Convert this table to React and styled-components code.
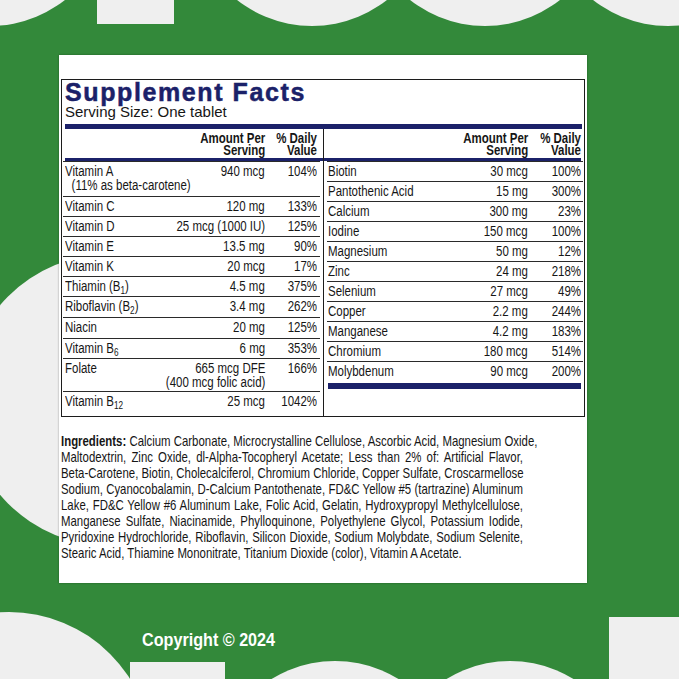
import React from 'react';
import styled, { createGlobalStyle } from 'styled-components';

const SANS = `"Liberation Sans", Arial, sans-serif`;
const SQUEEZE = 0.82;
const NAVY = '#1b2169';
const GREEN = '#33893a';
const GREY = '#efefef';
const INK = '#161616';

const Global = createGlobalStyle`
  html, body { margin: 0; padding: 0; background: ${GREEN}; }
  body { font-family: ${SANS}; }
`;

const Page = styled.div`
  position: relative;
  width: 679px;
  height: 679px;
  overflow: hidden;
  background: ${GREEN};
`;

const Backdrop = styled.svg`
  position: absolute;
  left: 0;
  top: 0;
  width: 679px;
  height: 679px;
`;

const Content = styled.div`
  position: relative;
  display: flex;
  flex-direction: column;
  align-items: flex-start;
  padding: 55px 0 0 59px;
`;

const Card = styled.section`
  width: 528px;
  height: 528px;
  box-sizing: border-box;
  background: #fff;
  padding: 24px 2px 0;
  box-shadow: 0 0 2px rgba(0, 0, 0, 0.35);
`;

const Label = styled.div`
  border: 1px solid #1c1c1c;
`;

const Title = styled.h1`
  margin: 0;
  padding-left: 3px;
  font-family: ${SANS};
  font-size: 25px;
  line-height: 24px;
  font-weight: 700;
  letter-spacing: 1.6px;
  color: ${NAVY};
  -webkit-text-stroke: 0.5px ${NAVY};
`;

const Serving = styled.div`
  padding-left: 3px;
  font-family: ${SANS};
  font-size: 15px;
  line-height: 16px;
  color: ${INK};
`;

const Bar = styled.div`
  height: ${(p) => p.$h}px;
  background: ${NAVY};
  margin: ${(p) => p.$m};
`;

const Tables = styled.div`
  display: grid;
  grid-template-columns: 261px 1fr;
`;

const Column = styled.div`
  display: flex;
  flex-direction: column;
  padding: ${(p) => p.$pad};
  border-left: ${(p) => (p.$divider ? '1px solid #1c1c1c' : 'none')};
`;

const Head = styled.div`
  display: grid;
  grid-template-columns: minmax(0, 1fr) auto ${(p) => p.$dv}px;
  height: 29px;
  box-sizing: border-box;
  padding: 3px ${(p) => p.$rp} 0 ${(p) => p.$lp};
  font-family: ${SANS};
  font-weight: 700;
  font-size: 14px;
  line-height: 12px;
  color: ${INK};
  text-align: right;
  white-space: nowrap;
`;

const HeadCell = styled.div`
  transform: scaleX(${SQUEEZE});
  transform-origin: right center;
`;

const Row = styled.div`
  display: grid;
  grid-template-columns: minmax(0, 1fr) auto ${(p) => p.$dv}px;
  height: ${(p) => p.$h}px;
  box-sizing: border-box;
  border-top: 1px solid #2a2a2a;
  padding: 2px ${(p) => p.$rp} 0 ${(p) => p.$lp};
  font-family: ${SANS};
  font-size: 14px;
  line-height: 14px;
  color: ${INK};
  white-space: nowrap;
`;

const Name = styled.div`
  text-align: left;
  transform: scaleX(${SQUEEZE});
  transform-origin: left center;
`;

const Note = styled.div`
  padding-left: ${(p) => p.$indent || 0}px;
`;

const Amount = styled.div`
  text-align: right;
  transform: scaleX(${SQUEEZE});
  transform-origin: right center;
`;

const Daily = styled.div`
  text-align: right;
  transform: scaleX(${SQUEEZE});
  transform-origin: right center;
`;

const Sub = styled.sub`
  font-size: 10px;
  line-height: 0;
  vertical-align: -3px;
`;

const ING_SCALE = 0.76;

const Ingredients = styled.div`
  margin-top: 16px;
  width: ${462 / ING_SCALE}px;
  transform: scaleX(${ING_SCALE});
  transform-origin: left top;
  font-family: ${SANS};
  font-size: 15px;
  line-height: 16px;
  color: ${INK};
`;

const IngLine = styled.span`
  display: block;
  white-space: nowrap;
  text-align: justify;
  text-align-last: ${(p) => (p.$last ? 'left' : 'justify')};
`;

const Bold = styled.b`
  font-weight: 700;
`;

const Copyright = styled.div`
  margin: 47px 0 0 83px;
  font-family: ${SANS};
  font-weight: 700;
  font-size: 19px;
  line-height: 20px;
  color: #ffffff;
  transform: scaleX(0.85);
  transform-origin: left center;
  white-space: nowrap;
`;

const leftRows = [
  { name: 'Vitamin A', note: '(11% as beta-carotene)', amt: '940 mcg', dv: '104%', h: 35 },
  { name: 'Vitamin C', amt: '120 mg', dv: '133%', h: 20 },
  { name: 'Vitamin D', amt: '25 mcg (1000 IU)', dv: '125%', h: 20 },
  { name: 'Vitamin E', amt: '13.5 mg', dv: '90%', h: 20 },
  { name: 'Vitamin K', amt: '20 mcg', dv: '17%', h: 20 },
  { name: <>Thiamin (B<Sub>1</Sub>)</>, amt: '4.5 mg', dv: '375%', h: 20 },
  { name: <>Riboflavin (B<Sub>2</Sub>)</>, amt: '3.4 mg', dv: '262%', h: 21 },
  { name: 'Niacin', amt: '20 mg', dv: '125%', h: 21 },
  { name: <>Vitamin B<Sub>6</Sub></>, amt: '6 mg', dv: '353%', h: 20 },
  { name: 'Folate', amt: '665 mcg DFE', amtNote: '(400 mcg folic acid)', dv: '166%', h: 33 },
  { name: <>Vitamin B<Sub>12</Sub></>, amt: '25 mcg', dv: '1042%', h: 25 },
];

const rightRows = [
  { name: 'Biotin', amt: '30 mcg', dv: '100%' },
  { name: 'Pantothenic Acid', amt: '15 mg', dv: '300%' },
  { name: 'Calcium', amt: '300 mg', dv: '23%' },
  { name: 'Iodine', amt: '150 mcg', dv: '100%' },
  { name: 'Magnesium', amt: '50 mg', dv: '12%' },
  { name: 'Zinc', amt: '24 mg', dv: '218%' },
  { name: 'Selenium', amt: '27 mcg', dv: '49%' },
  { name: 'Copper', amt: '2.2 mg', dv: '244%' },
  { name: 'Manganese', amt: '4.2 mg', dv: '183%' },
  { name: 'Chromium', amt: '180 mcg', dv: '514%' },
  { name: 'Molybdenum', amt: '90 mcg', dv: '200%' },
];

const ingredientLines = [
  'Calcium Carbonate, Microcrystalline Cellulose, Ascorbic Acid, Magnesium Oxide,',
  'Maltodextrin, Zinc Oxide, dl-Alpha-Tocopheryl Acetate; Less than 2% of: Artificial Flavor,',
  'Beta-Carotene, Biotin, Cholecalciferol, Chromium Chloride, Copper Sulfate, Croscarmellose',
  'Sodium, Cyanocobalamin, D-Calcium Pantothenate, FD&C Yellow #5 (tartrazine) Aluminum',
  'Lake, FD&C Yellow #6 Aluminum Lake, Folic Acid, Gelatin, Hydroxypropyl Methylcellulose,',
  'Manganese Sulfate, Niacinamide, Phylloquinone, Polyethylene Glycol, Potassium Iodide,',
  'Pyridoxine Hydrochloride, Riboflavin, Silicon Dioxide, Sodium Molybdate, Sodium Selenite,',
  'Stearic Acid, Thiamine Mononitrate, Titanium Dioxide (color), Vitamin A Acetate.',
];

function FactRow({ row, dv, lp, rp }) {
  return (
    <Row $h={row.h || 20} $dv={dv} $lp={lp} $rp={rp}>
      <Name>
        <div>{row.name}</div>
        {row.note && <Note $indent={8}>{row.note}</Note>}
      </Name>
      <Amount>
        <div>{row.amt}</div>
        {row.amtNote && <Note>{row.amtNote}</Note>}
      </Amount>
      <Daily>{row.dv}</Daily>
    </Row>
  );
}

function ColumnHead({ dv, lp, rp }) {
  return (
    <Head $dv={dv} $lp={lp} $rp={rp}>
      <span />
      <HeadCell>Amount Per<br />Serving</HeadCell>
      <HeadCell>% Daily<br />Value</HeadCell>
    </Head>
  );
}

export default function App() {
  return (
    <Page>
      <Global />
      <Backdrop viewBox="0 0 679 679" aria-hidden="true">
        <g fill={GREY}>
          <circle cx="-10" cy="-95" r="121" />
          <rect x="97" y="-10" width="77" height="34" />
          <circle cx="312" cy="-95" r="121" />
          <circle cx="485" cy="-95" r="121" />
          <circle cx="668" cy="-95" r="121" />
          <circle cx="111" cy="400" r="146" />
          <circle cx="9" cy="755" r="143" />
          <rect x="130" y="662" width="95" height="30" />
          <circle cx="335" cy="782" r="121" />
          <circle cx="510" cy="782" r="121" />
          <rect x="609" y="617" width="80" height="70" />
        </g>
      </Backdrop>
      <Content>
        <Card>
          <Label>
            <Title>Supplement Facts</Title>
            <Serving>Serving Size: One tablet</Serving>
            <Bar $h={5} $m="4px 2px 0 3px" />
            <Tables>
              <Column $pad="0 3px 0 1px">
                <ColumnHead dv={52} lp="2px" rp="3px" />
                <Bar $h={3} $m="0 -3px 0 2px" />
                {leftRows.map((r, i) => (
                  <FactRow key={i} row={r} dv={52} lp="2px" rp="3px" />
                ))}
              </Column>
              <Column $pad="0 1px 0 3px" $divider>
                <ColumnHead dv={53} lp="1px" rp="2px" />
                <Bar $h={3} $m="0 2px 0 -3px" />
                {rightRows.map((r, i) => (
                  <FactRow key={i} row={r} dv={53} lp="1px" rp="2px" />
                ))}
                <Bar $h={6} $m="2px 2px 0 1px" />
              </Column>
            </Tables>
          </Label>
          <Ingredients>
            {ingredientLines.map((line, i) => (
              <IngLine key={i} $last={i === ingredientLines.length - 1}>
                {i === 0 && <Bold>Ingredients: </Bold>}
                {line}
              </IngLine>
            ))}
          </Ingredients>
        </Card>
        <Copyright>Copyright © 2024</Copyright>
      </Content>
    </Page>
  );
}
